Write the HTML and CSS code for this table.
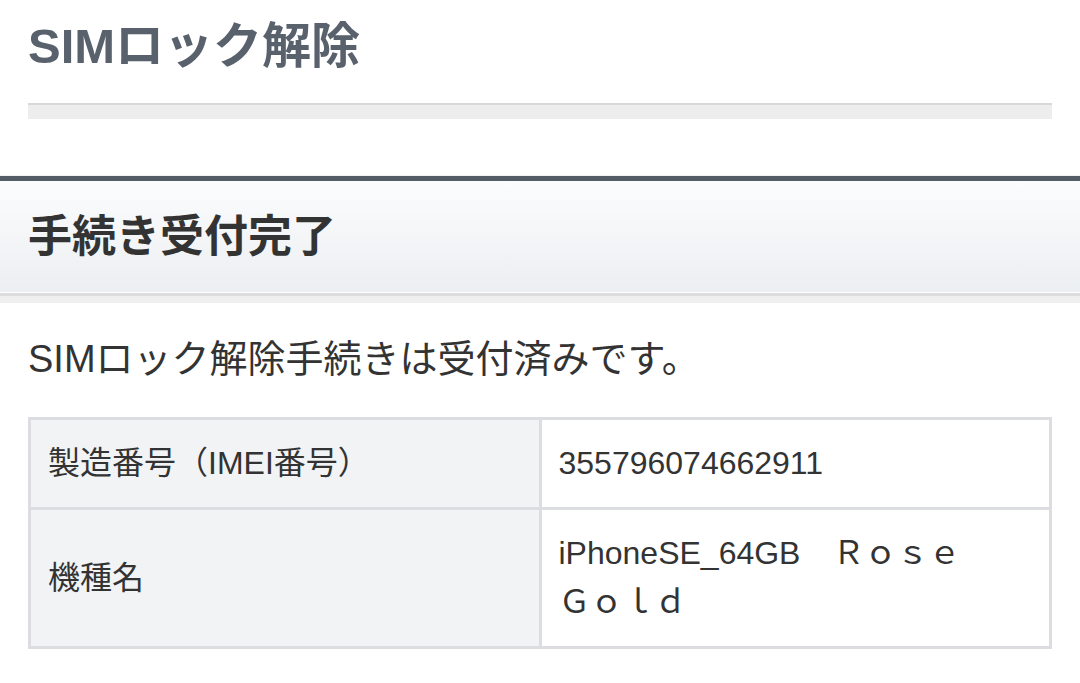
FILE: index.html
```html
<!DOCTYPE html>
<html lang="ja">
<head>
    <meta charset="UTF-8" />
    <title>SIMロック解除</title>
    <link rel="stylesheet" href="styles.css">
</head>
<body>
    <div class="page-head">
        <h1 class="page-title">SIMロック解除</h1>
        <div class="title-rule"></div>
    </div>

    <section class="result">
        <h2 class="result-title">手続き受付完了</h2>
        <div class="result-body">
            <p class="result-msg">SIMロック解除手続きは受付済みです。</p>

            <table class="detail-table">
                <tr>
                    <th>製造番号（IMEI番号）</th>
                    <td>355796074662911</td>
                </tr>
                <tr>
                    <th>機種名</th>
                    <td>iPhoneSE_64GB　Ｒｏｓｅ　Ｇｏｌｄ</td>
                </tr>
            </table>
        </div>
    </section>
</body>
</html>
```

FILE: styles.css
```css
body {
    font-family: 'Liberation Sans', 'Noto Sans CJK JP', sans-serif;
    background-color: #fff;
    color: #333;
    margin: 0;
    padding: 0;
}

.page-head {
    padding: 18px 28px 0;
}

.page-title {
    margin: 0;
    font-size: 49px;
    line-height: 56px;
    font-weight: bold;
    color: #59616c;
}

.title-rule {
    margin-top: 29px;
    height: 14px;
    background: #ededed;
    border-top: 2px solid #d8d8d8;
}

.result {
    margin-top: 56px;
    border-top: 1px solid #f2f2f2;
}

.result-title {
    margin: 0;
    padding: 0 28px;
    height: 111px;
    line-height: 111px;
    font-size: 44px;
    font-weight: bold;
    color: #333;
    background: linear-gradient(#fbfcfd, #eceff2);
    border-top: 5px solid #545d67;
    border-bottom: 1px solid #fff;
}

.result-body {
    border-top: 3px solid #dcdcde;
    padding: 0 28px;
}

.result-body::before {
    content: "";
    display: block;
    height: 7px;
    margin: 0 -28px;
    background: #efefef;
}

.result-msg {
    margin: 32px 0 34px;
    font-size: 38px;
    line-height: 48px;
    color: #333;
}

.detail-table {
    width: 100%;
    border-collapse: collapse;
    border: 3px solid #dcdde0;
    font-size: 32px;
    line-height: 49px;
}

.detail-table th,
.detail-table td {
    border: 3px solid #dcdde0;
    padding: 19px 40px 19px 17px;
    text-align: left;
    vertical-align: middle;
    font-weight: normal;
    color: #333;
}

.detail-table th {
    width: 50%;
    background: #f2f3f5;
}

.detail-table td {
    background: #fff;
}
```
